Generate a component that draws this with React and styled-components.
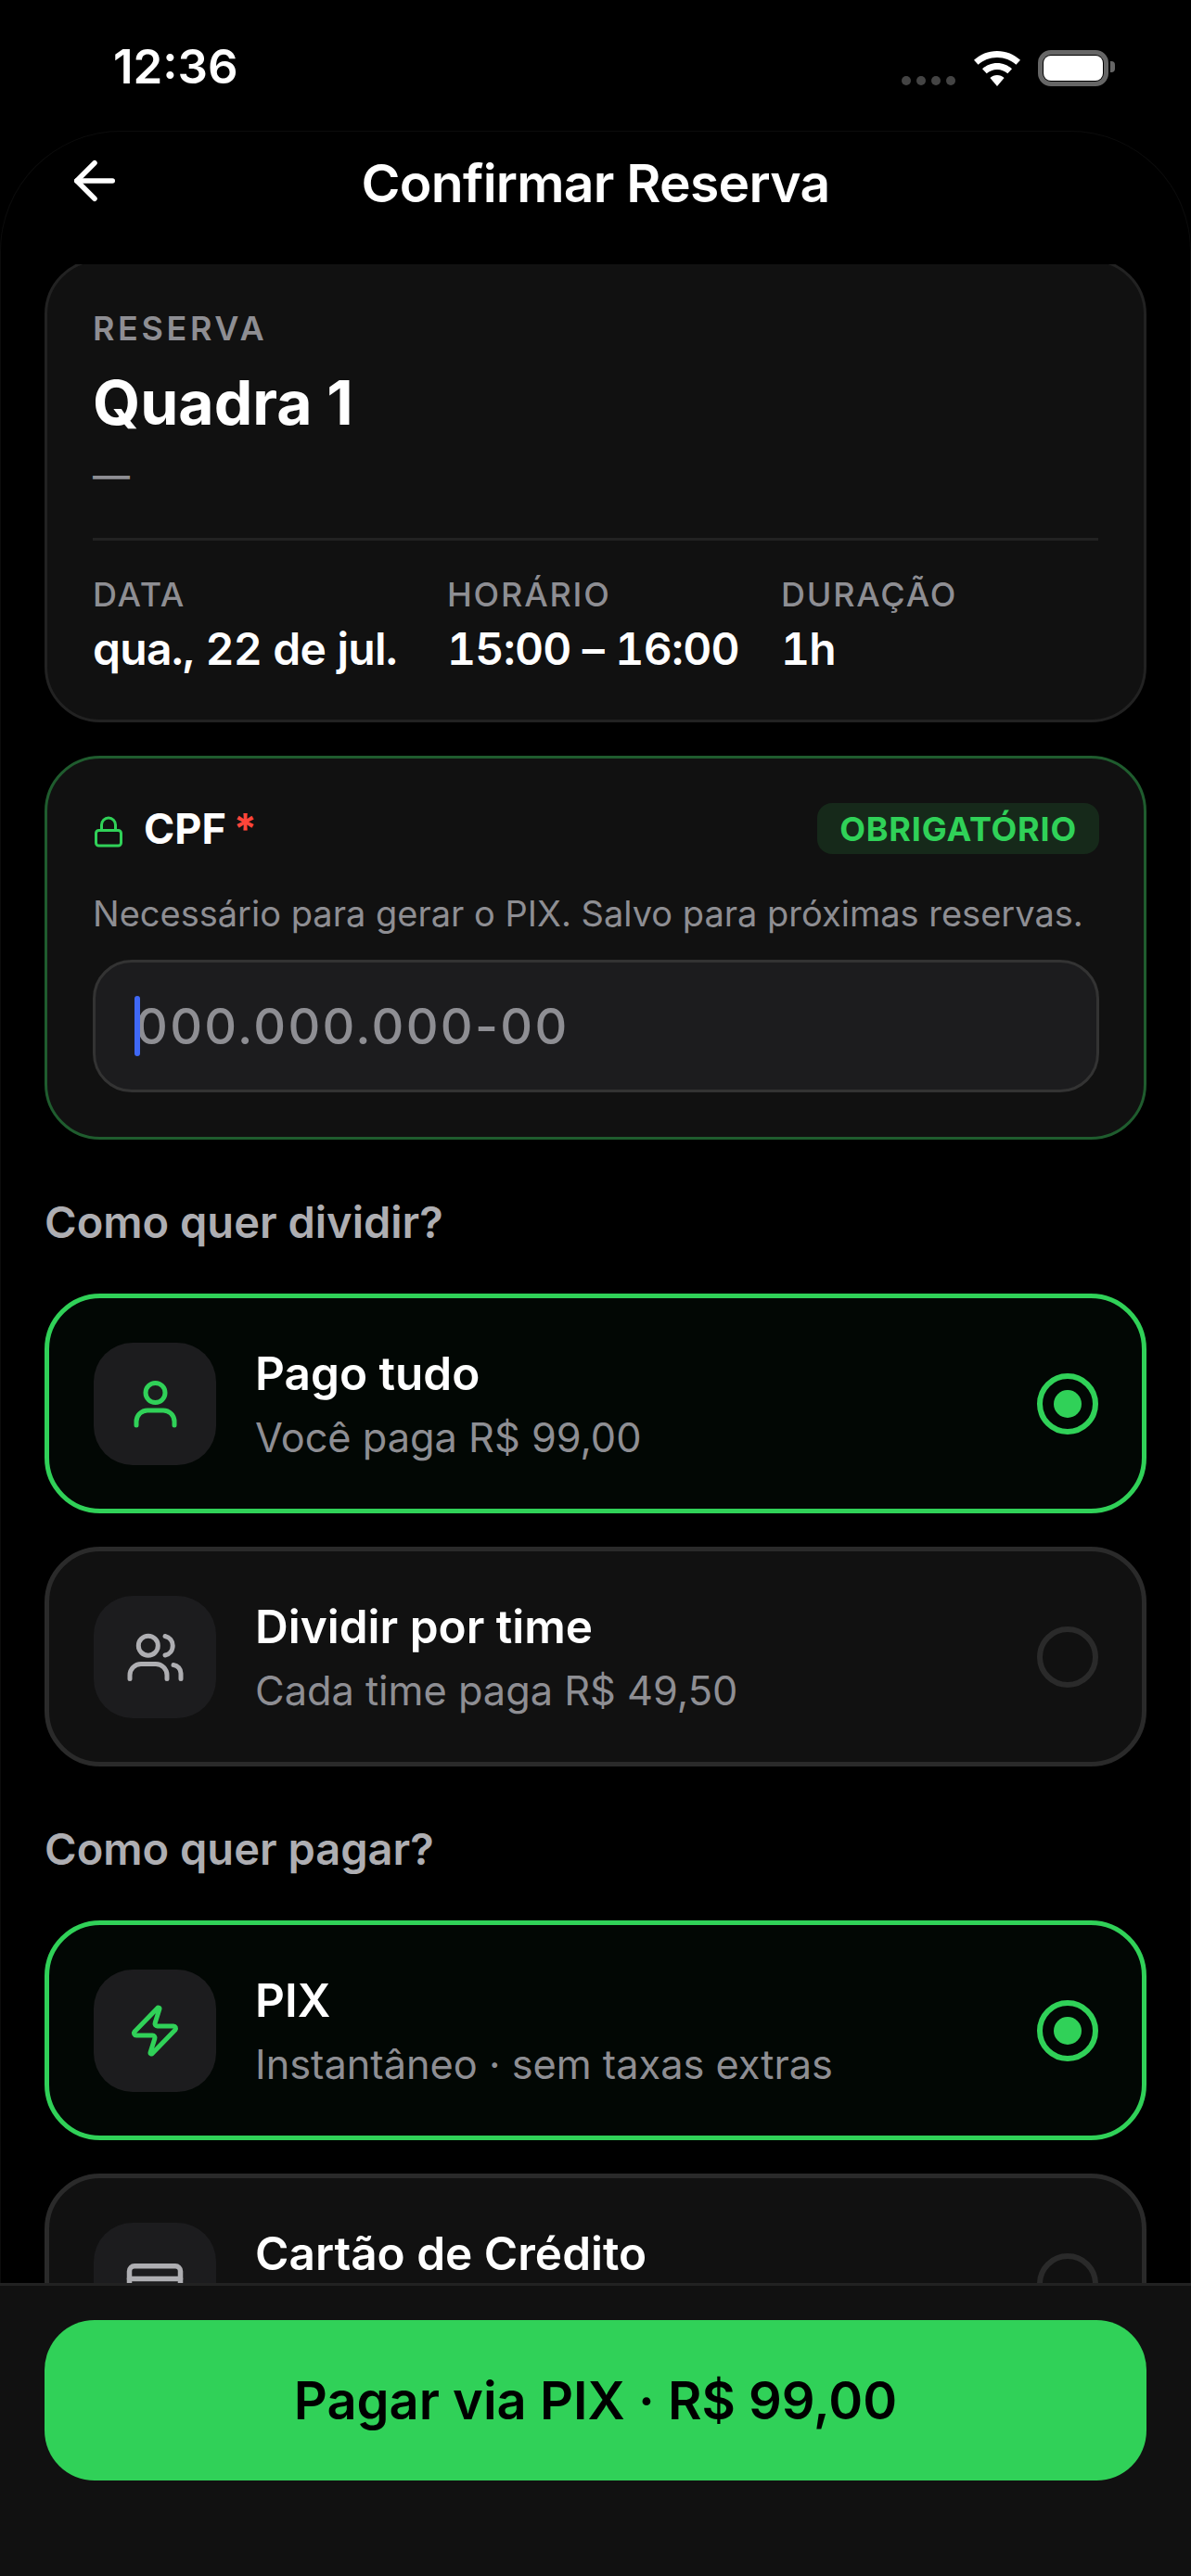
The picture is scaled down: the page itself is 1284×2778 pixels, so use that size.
import React from 'react';
import styled, { createGlobalStyle } from 'styled-components';
import { ArrowLeft, Lock, Zap, CreditCard } from 'lucide-react';

const GREEN = '#30D158';

const Global = createGlobalStyle`
  html, body { margin: 0; padding: 0; background: #000; }
  * { box-sizing: border-box; }
  body { font-family: Inter, "Liberation Sans", sans-serif; }
`;

const Page = styled.div`
  width: 1284px;
  height: 2778px;
  display: flex;
  flex-direction: column;
  background: #000;
  overflow: hidden;
`;

const StatusBar = styled.div`
  height: 141px;
  flex: none;
  display: flex;
  align-items: flex-start;
  justify-content: space-between;
  padding: 42px 89px 0 122px;
`;

const Time = styled.span`
  font-size: 51px;
  line-height: 60px;
  font-weight: 600;
  color: #fff;
`;

const StatusIcons = styled.div`
  display: flex;
  align-items: flex-end;
  height: 40px;
  margin-top: 11px;
`;

const Dots = styled.div`
  display: flex;
  gap: 6px;
  margin: 0 20px 1px 0;
`;

const Dot = styled.i`
  width: 10px;
  height: 10px;
  border-radius: 50%;
  background: #444;
`;

const Battery = styled.div`
  width: 76px;
  height: 39px;
  margin-left: 19px;
  padding: 1px;
  border: 5px solid #666;
  border-radius: 14px;
  position: relative;
  &::before {
    content: '';
    display: block;
    height: 100%;
    background: #fff;
    border-radius: 8px;
  }
  &::after {
    content: '';
    position: absolute;
    right: -12px;
    top: 7px;
    width: 5px;
    height: 12px;
    background: #666;
    border-radius: 0 4px 4px 0;
  }
`;

const Sheet = styled.div`
  flex: 1;
  min-height: 0;
  display: flex;
  flex-direction: column;
  border: 1px solid #0c0c0c;
  border-bottom: 0;
  border-radius: 130px 130px 0 0;
`;

const Nav = styled.header`
  height: 143px;
  flex: none;
  display: flex;
  align-items: center;
  justify-content: center;
  position: relative;
  padding-bottom: 32px;
`;

const BackButton = styled.button`
  position: absolute;
  left: 68px;
  top: 20px;
  width: 66px;
  height: 66px;
  padding: 0;
  border: 0;
  background: none;
  color: #fff;
  display: flex;
`;

const Title = styled.h1`
  margin: 0;
  font-size: 57px;
  line-height: 66px;
  font-weight: 600;
  letter-spacing: -0.75px;
  color: #fff;
`;

const Scroll = styled.main`
  flex: 1;
  min-height: 0;
  overflow: hidden;
  display: flex;
  flex-direction: column;
  gap: 36px;
  padding: 0 47px;
`;

const Card = styled.section`
  flex: none;
  background: #111;
  border: 3px solid #222;
  border-radius: 60px;
`;

const ReserveCard = styled(Card)`
  margin-top: -6px;
  height: 500px;
  padding: 50px 49px 0;
`;

const CpfCard = styled(Card)`
  height: 414px;
  padding: 48px 48px 0 49px;
  border-color: #1f5c2e;
`;

const Eyebrow = styled.div`
  font-size: 36px;
  line-height: 44px;
  font-weight: 600;
  letter-spacing: 3.6px;
  color: #8e8e93;
`;

const CourtName = styled.div`
  margin-top: 18px;
  font-size: 66px;
  line-height: 80px;
  font-weight: 700;
  color: #fff;
`;

const Dash = styled.div`
  margin-top: 13px;
  font-size: 40px;
  line-height: 52px;
  font-weight: 500;
  color: #8e8e93;
`;

const Divider = styled.div`
  height: 3px;
  margin: 41px 0 36px;
  background: #222;
`;

const Facts = styled.div`
  display: grid;
  grid-template-columns: 382px 360px 1fr;
`;

const FactLabel = styled.div`
  font-size: 36px;
  line-height: 44px;
  font-weight: 500;
  letter-spacing: 1.8px;
  color: #8e8e93;
`;

const FactValue = styled.div`
  margin-top: 8px;
  font-size: 48px;
  line-height: 58px;
  font-weight: 600;
  letter-spacing: -0.7px;
  font-variant-numeric: tabular-nums;
  white-space: nowrap;
  color: #fff;
`;

const CpfHead = styled.div`
  display: flex;
  align-items: center;
  height: 55px;
`;

const LockIcon = styled.span`
  display: flex;
  color: ${GREEN};
  margin: 6px 20px 0 -1px;
`;

const CpfTitle = styled.span`
  font-size: 45px;
  line-height: 55px;
  font-weight: 700;
  color: #fff;
`;

const Required = styled.span`
  margin-left: 8px;
  font-size: 45px;
  line-height: 55px;
  font-weight: 700;
  color: #ff453a;
`;

const Badge = styled.span`
  margin-left: auto;
  height: 55px;
  padding: 0 24px;
  display: flex;
  align-items: center;
  border-radius: 16px;
  background: #16291a;
  color: ${GREEN};
  font-size: 36px;
  font-weight: 700;
  letter-spacing: 0.8px;
`;

const Hint = styled.p`
  margin: 34px 0 20px;
  font-size: 38px;
  line-height: 60px;
  white-space: nowrap;
  color: #8e8e93;
`;

const Field = styled.div`
  position: relative;
  height: 143px;
  display: flex;
  align-items: center;
  padding: 0 43px;
  background: #1c1c1e;
  border: 3px solid #333;
  border-radius: 42px;
  font-size: 54px;
  font-weight: 500;
  letter-spacing: 2.3px;
  color: #8e8e93;
`;

const Caret = styled.i`
  position: absolute;
  left: 42px;
  top: 36px;
  width: 6px;
  height: 65px;
  border-radius: 3px;
  background: #3f68f6;
`;

const SectionLabel = styled.h2`
  margin: 23px 0 11px;
  font-size: 47px;
  line-height: 60px;
  font-weight: 600;
  color: #aeaeb2;
`;

const Option = styled.div`
  flex: none;
  height: 237px;
  display: flex;
  align-items: center;
  gap: 42px;
  padding: 0 47px 0 48px;
  background: ${p => (p.$selected ? '#020704' : '#111')};
  border: 5px solid ${p => (p.$selected ? GREEN : '#2a2a2a')};
  border-radius: 60px;
`;

const OptionIcon = styled.div`
  flex: none;
  width: 132px;
  height: 132px;
  display: flex;
  align-items: center;
  justify-content: center;
  border-radius: 42px;
  background: #1c1c1e;
  color: ${p => (p.$selected ? GREEN : '#aeaeb2')};
`;

const OptionText = styled.div`
  flex: 1;
  min-width: 0;
`;

const OptionTitle = styled.div`
  font-size: 49.5px;
  line-height: 60px;
  font-weight: 600;
  color: #fff;
`;

const OptionSub = styled.div`
  margin-top: 13px;
  font-size: 43.3px;
  line-height: 52px;
  color: #8e8e93;
`;

const Radio = styled.div`
  flex: none;
  width: 66px;
  height: 66px;
  display: flex;
  align-items: center;
  justify-content: center;
  border-radius: 50%;
  border: 6px solid ${p => (p.$selected ? GREEN : '#2a2a2a')};
  &::after {
    content: '';
    width: 30px;
    height: 30px;
    border-radius: 50%;
    background: ${p => (p.$selected ? GREEN : 'transparent')};
  }
`;

const Footer = styled.footer`
  flex: none;
  height: 316px;
  padding: 37px 48px 0;
  background: #111;
  border-top: 3px solid #222;
`;

const PayButton = styled.button`
  width: 100%;
  height: 173px;
  border: 0;
  border-radius: 54px;
  background: ${GREEN};
  color: #000;
  font-family: inherit;
  font-size: 56px;
  font-weight: 600;
`;

const WifiIcon = () => (
  <svg width="50" height="38" viewBox="0 0 50 38" fill="#fff">
    <path d="M25 0c9.6 0 18.4 3.7 25 9.8l-4.6 5C40 9.8 32.900 6.900 25 6.900S10 9.800 4.600 14.800L0 9.800C6.600 3.700 15.400 0 25 0z" />
    <path d="M25 13c6.200 0 11.800 2.400 16 6.200l-4.700 5.100C33.300 21.700 29.300 20 25 20s-8.300 1.700-11.300 4.300L9 19.200C13.200 15.400 18.800 13 25 13z" />
    <path d="M25 26c2.900 0 5.600 1.100 7.600 2.900L25 38l-7.600-9.100C19.400 27.100 22.100 26 25 26z" />
  </svg>
);

const PersonIcon = () => (
  <svg width="66" height="66" viewBox="0 0 66 66" fill="none" stroke="currentColor" strokeWidth="5" strokeLinecap="round">
    <circle cx="33.500" cy="21" r="10.500" />
    <path d="M13 56v-4a12 12 0 0 1 12-12h17a12 12 0 0 1 12 12v4" />
  </svg>
);

const TeamIcon = () => (
  <svg width="66" height="66" viewBox="0 0 66 66" fill="none" stroke="currentColor" strokeWidth="5" strokeLinecap="round">
    <circle cx="25.800" cy="20.700" r="10.500" />
    <path d="M44 10.500a10.500 10.500 0 0 1 0 20.500" />
    <path d="M6 56.500v-4a12 12 0 0 1 12-12h16a12 12 0 0 1 12 12v4" />
    <path d="M53 41.500a9 9 0 0 1 8 9v6" />
  </svg>
);

const facts = [
  { label: 'DATA', value: 'qua., 22 de jul.' },
  { label: 'HORÁRIO', value: '15:00 – 16:00' },
  { label: 'DURAÇÃO', value: '1h' },
];

const OptionRow = ({ icon, title, sub, selected }) => (
  <Option $selected={selected}>
    <OptionIcon $selected={selected}>{icon}</OptionIcon>
    <OptionText>
      <OptionTitle>{title}</OptionTitle>
      <OptionSub>{sub}</OptionSub>
    </OptionText>
    <Radio $selected={selected} />
  </Option>
);

export default function App() {
  return (
    <Page>
      <Global />
      <StatusBar>
        <Time>12:36</Time>
        <StatusIcons>
          <Dots><Dot /><Dot /><Dot /><Dot /></Dots>
          <WifiIcon />
          <Battery />
        </StatusIcons>
      </StatusBar>
      <Sheet>
        <Nav>
          <BackButton><ArrowLeft size={66} strokeWidth={2} /></BackButton>
          <Title>Confirmar Reserva</Title>
        </Nav>
        <Scroll>
          <ReserveCard>
            <Eyebrow>RESERVA</Eyebrow>
            <CourtName>Quadra 1</CourtName>
            <Dash>—</Dash>
            <Divider />
            <Facts>
              {facts.map(f => (
                <div key={f.label}>
                  <FactLabel>{f.label}</FactLabel>
                  <FactValue>{f.value}</FactValue>
                </div>
              ))}
            </Facts>
          </ReserveCard>
          <CpfCard>
            <CpfHead>
              <LockIcon><Lock size={36} strokeWidth={2} /></LockIcon>
              <CpfTitle>CPF</CpfTitle>
              <Required>*</Required>
              <Badge>OBRIGATÓRIO</Badge>
            </CpfHead>
            <Hint>Necessário para gerar o PIX. Salvo para próximas reservas.</Hint>
            <Field>
              <Caret />
              000.000.000-00
            </Field>
          </CpfCard>
          <SectionLabel>Como quer dividir?</SectionLabel>
          <OptionRow selected icon={<PersonIcon />} title="Pago tudo" sub="Você paga R$ 99,00" />
          <OptionRow icon={<TeamIcon />} title="Dividir por time" sub="Cada time paga R$ 49,50" />
          <SectionLabel>Como quer pagar?</SectionLabel>
          <OptionRow selected icon={<Zap size={60} strokeWidth={2} />} title="PIX" sub="Instantâneo · sem taxas extras" />
          <OptionRow icon={<CreditCard size={66} strokeWidth={2} />} title="Cartão de Crédito" sub={'\u00a0'} />
        </Scroll>
      </Sheet>
      <Footer>
        <PayButton>Pagar via PIX · R$ 99,00</PayButton>
      </Footer>
    </Page>
  );
}
